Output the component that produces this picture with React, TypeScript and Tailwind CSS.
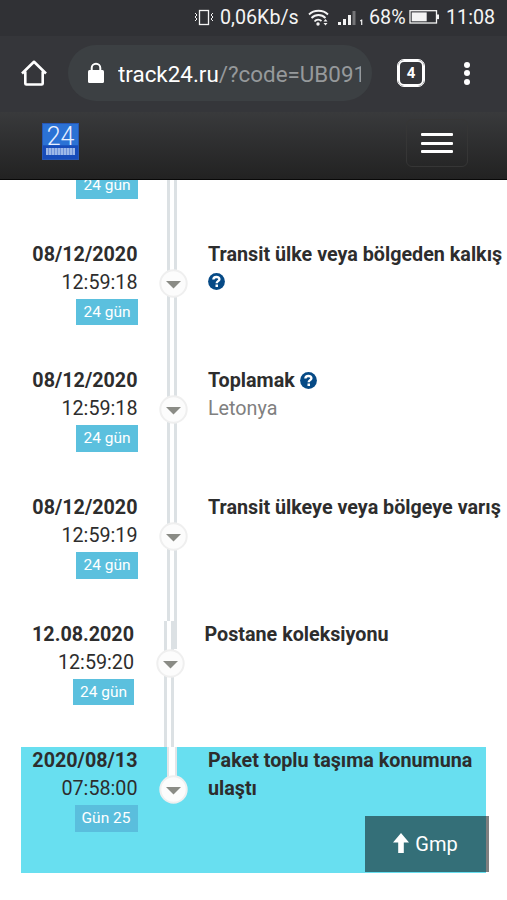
import React from 'react';
import clsx from 'clsx';

interface TrackingEvent {
  date: string;
  time: string;
  badge: string;
  title: string;
  place?: string;
  help?: boolean;
  shifted?: boolean;
  current?: boolean;
}

const events: TrackingEvent[] = [
  { date: '08/12/2020', time: '12:59:18', badge: '24 gün', title: 'Transit ülke veya bölgeden kalkış', help: true },
  { date: '08/12/2020', time: '12:59:18', badge: '24 gün', title: 'Toplamak', place: 'Letonya', help: true },
  { date: '08/12/2020', time: '12:59:19', badge: '24 gün', title: 'Transit ülkeye veya bölgeye varış' },
  { date: '12.08.2020', time: '12:59:20', badge: '24 gün', title: 'Postane koleksiyonu', shifted: true },
  { date: '2020/08/13', time: '07:58:00', badge: 'Gün 25', title: 'Paket toplu taşıma konumuna ulaştı', current: true },
];

const StatusBar: React.FC = () => (
  <div className="h-[36px] shrink-0 bg-[#303135] text-[#f4f4f4] flex items-center justify-end pr-[12px] text-[19.7px] leading-[36px] whitespace-nowrap">
    <svg width="20" height="18" viewBox="0 0 20 18" fill="none" stroke="currentColor" className="mr-[6px]">
      <rect x="5.5" y="1.5" width="9" height="14" strokeWidth="1.3" />
      <path d="M1 4l2 2-2 2 2 2-2 2M19 4l-2 2 2 2-2 2 2 2" strokeWidth="1" />
    </svg>
    <span className="w-[79px]">0,06Kb/s</span>
    <svg width="21" height="18" viewBox="0 0 21 18" fill="none" stroke="currentColor" strokeWidth="1.8" className="ml-[9px]">
      <path d="M1 5.5C6 .5 15 .5 20 5.5M3.5 9c4-4 10-4 14 0M6.5 12.5c2-2.3 5-2.3 7-.5" />
      <circle cx="10" cy="15" r="1.7" fill="currentColor" stroke="none" />
      <path d="M15.5 12.5l2-2.5 2 2.5zM15.5 14l2 2.5 2-2.5z" fill="currentColor" stroke="none" />
    </svg>
    <svg width="26" height="18" viewBox="0 0 26 18" fill="currentColor" className="ml-[9px]">
      <rect x="0" y="13" width="3" height="3" />
      <rect x="5" y="10" width="3" height="6" />
      <rect x="10" y="6" width="3" height="10" />
      <rect x="14.5" y="2" width="3" height="14" opacity="0.35" />
      <path d="M22 11.5l1.300-1h1V16h-1.200v-4l-1.100.6z" />
    </svg>
    <span className="ml-[5px] w-[37px]">68%</span>
    <svg width="31" height="16" viewBox="0 0 31 16" className="ml-[3px] mb-[2px]">
      <rect x="1" y="1.7" width="26.5" height="12.3" fill="none" stroke="currentColor" strokeWidth="1.3" />
      <rect x="2.7" y="3.4" width="15" height="8.9" fill="currentColor" />
      <rect x="28" y="5.5" width="2" height="4.6" fill="currentColor" />
    </svg>
    <span className="ml-[6px] w-[49px]">11:08</span>
  </div>
);

const AddressBar: React.FC = () => (
  <div className="h-[76px] shrink-0 bg-[#35363a] flex items-center text-white">
    <svg width="28" height="28" viewBox="0 0 28 28" fill="none" stroke="currentColor" strokeWidth="2.6" strokeLinejoin="round" className="ml-[20px] mb-[2px]">
      <path d="M2 14.5L14 2.800l12 11.700M5.300 12.500v12q0 1 1 1h15.400q1 0 1-1v-12" />
    </svg>
    <div className="ml-[20px] w-[304px] h-[56px] rounded-full bg-[#3c4043] flex items-center overflow-hidden mb-[2px]">
      <svg width="16" height="22" viewBox="0 0 16 22" className="ml-[20px] shrink-0">
        <path d="M3.700 9V6a4.300 4.300 0 018.600 0v3" fill="none" stroke="currentColor" strokeWidth="2" />
        <rect x="0" y="8" width="16" height="13" rx="1.5" fill="currentColor" />
      </svg>
      <div className="ml-[14px] w-[243px] overflow-hidden whitespace-nowrap text-[22.4px] leading-[30px] pt-[1px]">
        track24.ru<span className="text-[#96999b]">/?code=UB091</span>
      </div>
    </div>
    <div className="ml-[26px] mb-[2px] size-[26px] shrink-0 rounded-[6px] border-[2px] border-white outline-[0.5px] outline-white flex items-center justify-center text-[15px] font-bold">
      4
    </div>
    <div className="ml-[40px] mb-[2px] flex flex-col gap-[2.5px]">
      <span className="size-[6px] rounded-full bg-white" />
      <span className="size-[6px] rounded-full bg-white" />
      <span className="size-[6px] rounded-full bg-white" />
    </div>
  </div>
);

const SiteHeader: React.FC = () => (
  <header className="h-[68px] shrink-0 bg-linear-to-b from-[#393a3c] to-[#222] border-b border-[#080808] flex justify-between items-start">
    <div className="ml-[42px] mt-[11px] w-[37px] h-[37px] border border-[#2757b5] bg-linear-to-b from-[#2b72d5] from-60% to-[#174cba] to-62% flex flex-col items-center text-[#e9f0ff]">
      <span className="text-[25px] leading-[25px] h-[24px] font-light">24</span>
      <svg width="29" height="7" viewBox="0 0 29 7" className="shrink-0">
        <rect width="29" height="7" fill="#9db8e8" />
        <path d="M2.500 0v7m3-7v7m3-7v7m3-7v7m3-7v7m3-7v7m3-7v7m3-7v7m3-7v7" stroke="#6e91d8" strokeWidth="1" />
      </svg>
    </div>
    <button className="mr-[39px] mt-[7px] w-[62px] h-[48px] rounded-[6px] border border-[#363636] flex flex-col items-center justify-center gap-[5.5px]">
      <span className="block w-[32px] h-[3px] rounded-[1px] bg-white" />
      <span className="block w-[32px] h-[3px] rounded-[1px] bg-white" />
      <span className="block w-[32px] h-[3px] rounded-[1px] bg-white" />
    </button>
  </header>
);

const HelpIcon: React.FC<{ className?: string }> = ({ className }) => (
  <svg width="17" height="17" viewBox="0 0 17 17" className={clsx('inline-block', className)}>
    <circle cx="8.5" cy="8.5" r="8.4" fill="#064a86" />
    <path d="M5.400 6.500C5.400 3.100 11.500 3.200 11.400 6.200c0 2-2.700 1.900-2.700 4" fill="none" stroke="#fff" strokeWidth="2.4" />
    <rect x="7.5" y="11.5" width="2.5" height="2.5" fill="#fff" />
  </svg>
);

const Marker: React.FC = () => (
  <svg width="29" height="29" viewBox="0 0 29 29" className="absolute left-[-8px] top-[28px]">
    <circle cx="14.5" cy="14.5" r="13.2" fill="#fcfcfc" stroke="#efefef" strokeWidth="2" />
    <path d="M7 12h15l-7.500 7.500z" fill="#8a8b85" />
  </svg>
);

const Rail: React.FC<{ event: TrackingEvent }> = ({ event }) => (
  <div className="relative w-[10px] shrink-0 ml-[29.5px]">
    <div
      className={clsx(
        'w-[10px]',
        event.current ? 'h-[32px] border-x-[2px] border-[#e3e6e8] bg-white' : 'h-full border-x-[3px] border-[#dce1e4]'
      )}
    />
    {event.shifted && <span className="absolute left-[10px] top-0 w-[3px] h-[28px] bg-[#dce1e4]" />}
    <Marker />
  </div>
);

const EventRow: React.FC<{ event: TrackingEvent }> = ({ event }) => (
  <li
    className={clsx(
      'flex shrink-0',
      event.current ? 'ml-[21px] w-[465px] h-[126px] bg-[#68dff0]' : 'h-[126.6px]'
    )}
  >
    <div
      className={clsx(
        'shrink-0 flex flex-col items-end',
        event.current ? 'w-[116.5px]' : event.shifted ? 'w-[134px]' : 'w-[137.5px]'
      )}
    >
      <b className="font-bold">{event.date}</b>
      <span>{event.time}</span>
      <span
        className={clsx(
          'mt-[2px] px-[7px] h-[26.5px] text-[15.5px] leading-[26px] text-white',
          event.current ? 'bg-[#5abedd]' : 'bg-[#5bc0de]'
        )}
      >
        {event.badge}
      </span>
    </div>
    <Rail event={event} />
    <div className={clsx('ml-[31px]', event.current ? 'w-[275px]' : 'whitespace-nowrap')}>
      <b className="font-bold">{event.title}</b>
      {event.help && event.place && <HelpIcon className="ml-[5px] mt-[-4px]" />}
      {event.help && !event.place && (
        <div>
          <HelpIcon className="mt-[-4px]" />
        </div>
      )}
      {event.place && <div className="text-[#808080]">{event.place}</div>}
    </div>
  </li>
);

export default function App() {
  return (
    <div className="relative w-[507px] h-[900px] overflow-hidden bg-white flex flex-col font-[Roboto,sans-serif]">
      <StatusBar />
      <AddressBar />
      <SiteHeader />
      <main className="grow overflow-hidden text-[19.73px] leading-[28px] text-[#2d2d2d]">
        <ul className="flex flex-col">
          {/* tail of the event scrolled under the header */}
          <li className="flex h-[60.9px] shrink-0 overflow-hidden">
            <div className="w-[137.5px] flex justify-end">
              <span className="mt-[-8px] px-[7px] h-[26.5px] bg-[#5bc0de] text-[15.5px] leading-[26px] text-white">24 gün</span>
            </div>
            <div className="ml-[29.5px] w-[10px] border-x-[3px] border-[#dce1e4]" />
          </li>
          {events.map((event, i) => (
            <EventRow key={i} event={event} />
          ))}
        </ul>
      </main>
      <button className="absolute left-[365px] top-[816px] w-[124px] h-[56px] bg-black/50 text-white text-[20px] flex items-center justify-center gap-[6px] pr-[3px]">
        <svg width="16" height="20" viewBox="0 0 16 20" fill="currentColor" className="mb-[2px]">
          <path d="M8 0l8 9.500h-5.200V20H5.200V9.500H0z" />
        </svg>
        Gmp
      </button>
    </div>
  );
}
